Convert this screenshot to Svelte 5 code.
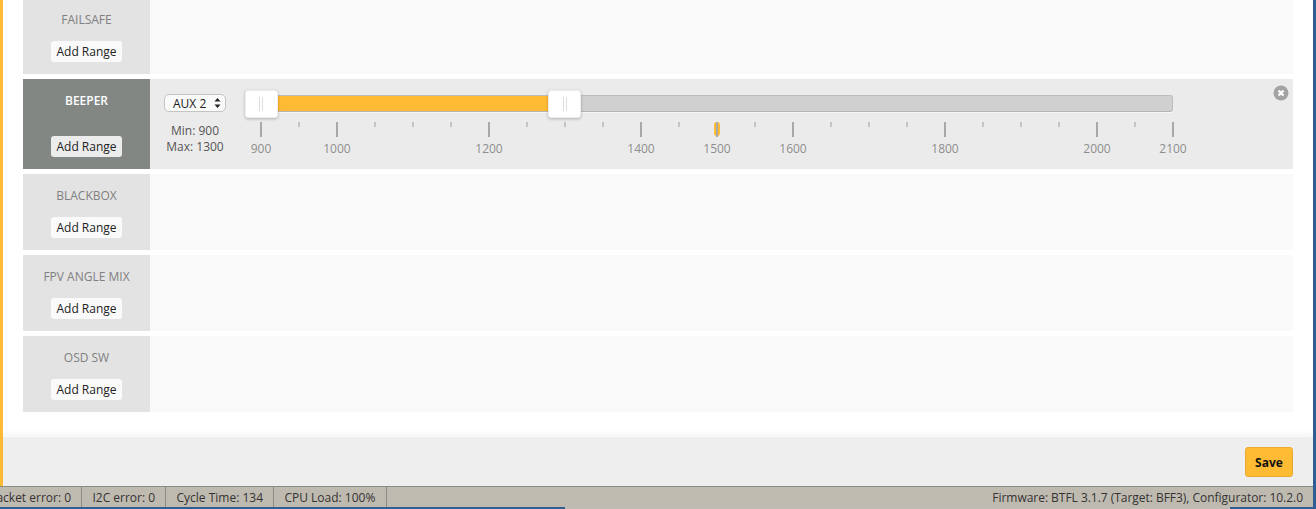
<script>
	const rows = [
		{ name: 'FAILSAFE', h: 74, pad: 13 },
		{ name: 'BEEPER', active: true, h: 90, pad: 15 },
		{ name: 'BLACKBOX', h: 76, pad: 15 },
		{ name: 'FPV ANGLE MIX', h: 76, pad: 15 },
		{ name: 'OSD SW', h: 76, pad: 15 }
	];

	// pwm range of the slider, mapped to percent
	const pct = (v) => ((v - 900) / 1200) * 100;
	const big = [900, 1000, 1200, 1400, 1500, 1600, 1800, 2000, 2100];
	const small = [950, 1050, 1100, 1150, 1250, 1300, 1350, 1450, 1550, 1650, 1700, 1750, 1850, 1900, 1950, 2050];
	const stats = ['Packet error: 0', 'I2C error: 0', 'Cycle Time: 134', 'CPU Load: 100%'];
</script>

<div class="window">
	<div class="tab">
		<div class="content">
			{#each rows as row}
				<div class="mode" class:active={row.active} style="height: {row.h}px">
					<div class="info" style="padding-top: {row.pad}px">
						<div class="name">{row.name}</div>
						<button class="add">Add Range</button>
					</div>
					{#if row.active}
						<div class="range">
							<div class="channel">
								<div class="select">
									<span>AUX 2</span>
									<svg width="7" height="12" viewBox="0 0 7 12"><path d="M3.5 1 L6.5 4.6 H0.5 Z M3.5 11 L6.5 7.4 H0.5 Z" fill="#222" /></svg>
								</div>
								<div class="minmax">Min: 900<br />Max: 1300</div>
							</div>
							<div class="slider">
								<div class="track">
									<div class="fill"></div>
								</div>
								<div class="handle" style="left: {pct(900)}%"><i></i></div>
								<div class="handle" style="left: {pct(1300)}%"><i></i></div>
								{#each small as v}
									<div class="tick small" style="left: {pct(v)}%"></div>
								{/each}
								<div class="marker" style="left: {pct(1500)}%"></div>
								{#each big as v}
									<div class="tick" style="left: {pct(v)}%"></div>
									<div class="label" style="left: {pct(v)}%">{v}</div>
								{/each}
							</div>
							<svg class="remove" width="16" height="16" viewBox="0 0 16 16">
								<circle cx="8" cy="8" r="7.5" fill="#a3a3a3" />
								<path d="M5.5 5.5 L10.5 10.5 M10.5 5.5 L5.5 10.5" stroke="#fff" stroke-width="2.4" />
							</svg>
						</div>
					{/if}
				</div>
			{/each}
		</div>
		<div class="toolbar">
			<button class="save">Save</button>
		</div>
	</div>
	<div class="status">
		<div class="stats">
			{#each stats as s}
				<span>{s}</span>
			{/each}
		</div>
		<div class="version">Firmware: BTFL 3.1.7 (Target: BFF3), Configurator: 10.2.0</div>
	</div>
</div>

<style>
	:global(body) {
		margin: 0;
		background: linear-gradient(90deg, #2f5f92 565px, #bfbcb4 565px, #bfbcb4 1230px, #2f5f92 1230px);
		overflow: hidden;
	}
	.window {
		width: 1313px;
		height: 507px;
		display: flex;
		flex-direction: column;
		font-family: 'Open Sans', 'Liberation Sans', sans-serif;
		overflow: hidden;
	}
	.tab {
		height: 486px;
		flex: none;
		display: flex;
		flex-direction: column;
		background: #fff;
		border-left: 3px solid #ffbb33;
		box-sizing: border-box;
	}
	.content {
		flex: 1;
		padding: 0 0 0 20px;
		margin-right: 20px;
		display: flex;
		flex-direction: column;
		gap: 5px;
	}
	.mode {
		display: flex;
		background: #f9f9f9;
		flex: none;
		position: relative;
	}
	.mode.active {
		background: #ebebeb;
	}
	.info {
		width: 127px;
		flex: none;
		background: #e3e3e3;
		box-sizing: border-box;
		display: flex;
		flex-direction: column;
		align-items: center;
		gap: 14px;
	}
	.active .info {
		background: #828784;
		gap: 28px;
	}
	.name {
		font-size: 12px;
		line-height: 14px;
		color: #808080;
		font-weight: 400;
	}
	.active .name {
		color: #fff;
		font-weight: 600;
	}
	.add {
		width: 71px;
		height: 21px;
		padding: 0;
		border: none;
		border-radius: 3px;
		background: #fafafa;
		color: #222;
		font-family: inherit;
		font-size: 12px;
	}
	.active .add {
		background: #ececec;
	}
	.range {
		flex: 1;
		display: flex;
		position: relative;
	}
	.channel {
		width: 95px;
		flex: none;
		padding: 15px 0 0 14px;
		box-sizing: border-box;
	}
	.select {
		width: 62px;
		height: 18px;
		box-sizing: border-box;
		border: 1px solid #c4c4c4;
		border-radius: 5px;
		background: #fafafa;
		display: flex;
		align-items: center;
		justify-content: space-between;
		padding: 0 4px 0 8px;
		font-size: 12px;
		color: #222;
	}
	.minmax {
		width: 62px;
		margin-top: 11px;
		font-size: 12px;
		line-height: 16px;
		color: #555;
		text-align: center;
	}
	.slider {
		width: 912px;
		margin-left: 16px;
		position: relative;
	}
	.track {
		position: absolute;
		left: 0;
		right: 0;
		top: 16px;
		height: 17px;
		box-sizing: border-box;
		background: #d0d0d0;
		border: 1px solid #bdbdbd;
		border-bottom-color: #b5b5b5;
		border-radius: 3px;
		box-shadow: 0 1px 0 #f7f7f7;
	}
	.fill {
		height: 100%;
		width: 33.33%;
		background: #ffbb33;
	}
	.handle {
		position: absolute;
		top: 11px;
		width: 33px;
		height: 28px;
		margin-left: -16.5px;
		box-sizing: border-box;
		background: #fff;
		border: 1px solid #eee;
		border-radius: 3px;
		box-shadow: 0 1px 3px rgba(0, 0, 0, 0.25);
		display: flex;
		justify-content: center;
		align-items: center;
	}
	.handle i {
		width: 2px;
		height: 14px;
		border-left: 1px solid #ddd;
		border-right: 1px solid #ddd;
	}
	.tick {
		position: absolute;
		top: 43px;
		width: 1.5px;
		height: 15px;
		margin-left: -0.75px;
		background: #a8a8a8;
	}
	.tick.small {
		top: 43px;
		height: 5px;
		background: #c4c4c4;
	}
	.marker {
		position: absolute;
		top: 43px;
		width: 6px;
		height: 14px;
		margin-left: -3px;
		border-radius: 3px;
		background: #ffbb33;
	}
	.label {
		position: absolute;
		top: 62px;
		width: 50px;
		margin-left: -25px;
		text-align: center;
		font-size: 12px;
		line-height: 16px;
		color: #8e8e8e;
	}
	.remove {
		position: absolute;
		top: 6px;
		right: 4.5px;
	}
	.toolbar {
		margin-top: auto;
		height: 50px;
		flex: none;
		box-sizing: border-box;
		background: #eee;
		border-top: 1px solid #fafafa;
		box-shadow: 0 -3px 5px rgba(0, 0, 0, 0.04);
		display: flex;
		justify-content: flex-end;
		align-items: center;
		padding: 1px 20px 0 0;
	}
	.save {
		width: 48px;
		height: 30px;
		padding: 0;
		border: 1px solid #e8ab30;
		border-radius: 3px;
		background: #ffbb33;
		color: #111;
		font-family: inherit;
		font-size: 12px;
		font-weight: 700;
	}
	.status {
		height: 21px;
		flex: none;
		box-sizing: border-box;
		background: #bfbab0;
		border-top: 1px solid #8a8a86;
		display: flex;
		justify-content: space-between;
		align-items: center;
		font-size: 12px;
		color: #333;
		overflow: hidden;
	}
	.stats {
		display: flex;
		height: 100%;
		margin-left: -21px;
	}
	.stats span {
		padding: 0 10.2px;
		border-right: 1px solid #8a8a86;
		line-height: 21px;
		white-space: nowrap;
	}
	.version {
		padding: 1px 10px 0 0;
		letter-spacing: -0.03px;
		white-space: nowrap;
	}
</style>
